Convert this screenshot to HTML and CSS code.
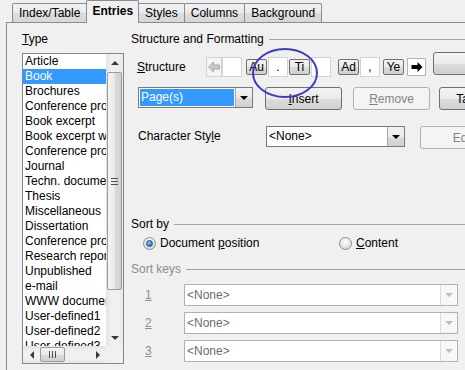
FILE: index.html
```html
<!DOCTYPE html>
<html lang="en">
<head>
    <meta charset="UTF-8">
    <title>Entries</title>
    <link rel="stylesheet" href="styles.css">
</head>
<body>
    <div class="dialog">
        <div class="tabs">
            <div class="tab">Index/Table</div>
            <div class="tab active">Entries</div>
            <div class="tab">Styles</div>
            <div class="tab">Columns</div>
            <div class="tab">Background</div>
        </div>

        <div class="panel">
            <div class="type-col">
                <div class="label"><u>T</u>ype</div>
                <div class="listbox">
                    <div class="list-view">
                        <ul class="items">
                            <li>Article</li>
                            <li class="selected">Book</li>
                            <li>Brochures</li>
                            <li>Conference proceedings</li>
                            <li>Book excerpt</li>
                            <li>Book excerpt with title</li>
                            <li>Conference proceedings</li>
                            <li>Journal</li>
                            <li>Techn. documentation</li>
                            <li>Thesis</li>
                            <li>Miscellaneous</li>
                            <li>Dissertation</li>
                            <li>Conference proceedings</li>
                            <li>Research report</li>
                            <li>Unpublished</li>
                            <li>e-mail</li>
                            <li>WWW document</li>
                            <li>User-defined1</li>
                            <li>User-defined2</li>
                            <li>User-defined3</li>
                        </ul>
                        <div class="vscroll">
                            <div class="sb-btn"><span class="tri-up"></span></div>
                            <div class="sb-track">
                                <div class="vthumb"><span class="vgrip"></span></div>
                            </div>
                            <div class="sb-btn"><span class="tri-down"></span></div>
                        </div>
                    </div>
                    <div class="hscroll-row">
                        <div class="hscroll">
                            <div class="sb-btn"><span class="tri-left"></span></div>
                            <div class="hthumb"><span class="hgrip"></span></div>
                            <div class="sb-spacer"></div>
                            <div class="sb-btn"><span class="tri-right"></span></div>
                        </div>
                        <div class="sb-corner"></div>
                    </div>
                </div>
            </div>

            <div class="main-col">
                <div class="group-title">Structure and Formatting</div>

                <div class="structure-row">
                    <span class="row-label structure-label"><u>S</u>tructure</span>
                    <div class="strip">
                        <span class="strip-arrow">
                            <svg width="12" height="12" viewBox="0 0 12 12"><polygon points="0.5,6 5.5,1 5.5,4 11.5,4 11.5,8 5.5,8 5.5,11" fill="#c8c8c8" stroke="#a8a8a8" stroke-width="1"/></svg>
                        </span>
                        <span class="token-field"></span>
                        <span class="token-btn gap-l">Au</span>
                        <span class="token-field">.</span>
                        <span class="token-btn">Ti</span>
                        <span class="token-field"></span>
                        <span class="token-btn gap-xl">Ad</span>
                        <span class="token-field">,</span>
                        <span class="token-btn gap-m">Ye</span>
                        <span class="strip-arrow right">
                            <svg width="12" height="12" viewBox="0 0 12 12"><polygon points="11.5,6 6.5,1 6.5,4 0.5,4 0.5,8 6.5,8 6.5,11" fill="#000"/></svg>
                        </span>
                    </div>
                    <button class="btn side-btn top-btn"></button>
                </div>

                <div class="action-row">
                    <div class="combo page-combo">
                        <span class="combo-text chosen">Page(s)</span>
                        <span class="combo-btn"></span>
                    </div>
                    <button class="btn insert-btn"><u>I</u>nsert</button>
                    <button class="btn remove-btn" disabled><u>R</u>emove</button>
                    <button class="btn side-btn tab-btn">Tab stop</button>
                </div>

                <div class="char-row">
                    <span class="row-label char-label">Character Sty<u>l</u>e</span>
                    <div class="combo char-combo">
                        <span class="combo-text">&lt;None&gt;</span>
                        <span class="combo-btn"></span>
                    </div>
                    <button class="btn edit-btn" disabled>Edit...</button>
                </div>

                <div class="group-title sort-title">Sort by</div>
                <div class="radio-row">
                    <label class="radio-item first">
                        <span class="radio checked"></span>
                        <span>Document <u>p</u>osition</span>
                    </label>
                    <label class="radio-item">
                        <span class="radio"></span>
                        <span><u>C</u>ontent</span>
                    </label>
                </div>

                <div class="group-title keys-title">Sort keys</div>
                <div class="key-row">
                    <span class="key-label"><u>1</u></span>
                    <div class="combo key-combo">
                        <span class="combo-text">&lt;None&gt;</span>
                        <span class="combo-btn"></span>
                    </div>
                </div>
                <div class="key-row">
                    <span class="key-label"><u>2</u></span>
                    <div class="combo key-combo">
                        <span class="combo-text">&lt;None&gt;</span>
                        <span class="combo-btn"></span>
                    </div>
                </div>
                <div class="key-row">
                    <span class="key-label"><u>3</u></span>
                    <div class="combo key-combo">
                        <span class="combo-text">&lt;None&gt;</span>
                        <span class="combo-btn"></span>
                    </div>
                </div>
            </div>
        </div>

        <!-- hand-drawn highlight around the "." field -->
        <svg class="annotation" width="465" height="370" viewBox="0 0 465 370">
            <ellipse cx="285" cy="73" rx="32" ry="24" fill="none" stroke="#3c3cc4" stroke-width="2"/>
        </svg>
    </div>
</body>
</html>
```

FILE: styles.css
```css
body {
    margin: 0;
    background: #f0f0f0;
    font-family: "Liberation Sans", Arial, sans-serif;
    font-size: 12px;
    color: #000;
    overflow: hidden;
}
.dialog {
    position: relative;
    width: 520px;
    height: 370px;
}

/* tabs */
.tabs {
    display: flex;
    align-items: flex-end;
    height: 22px;
    padding-left: 13px;
    position: relative;
    z-index: 1;
}
.tab {
    height: 18px;
    line-height: 18px;
    padding: 0 6px;
    margin-left: -1px;
    border: 1px solid #898c95;
    border-bottom: none;
    border-radius: 2px 2px 0 0;
    background: linear-gradient(#f3f3f3, #e9e9e9 50%, #dcdcdc 51%, #d7d7d7);
}
.tab.active {
    height: 22px;
    line-height: 21px;
    margin-bottom: -1px;
    font-weight: bold;
    padding: 0 5px;
    background: #f0f0f0;
}

.panel {
    display: flex;
    height: 339px;
    margin-left: 6px;
    padding: 8px 0 0 15px;
    border-top: 1px solid #898c95;
    border-left: 1px solid #898c95;
}

/* type list */
.type-col {
    width: 102px;
    margin-right: 7px;
    flex-shrink: 0;
}
.label {
    line-height: 16px;
}
.listbox {
    margin-top: 6px;
    width: 100px;
    height: 309px;
    border: 1px solid #828790;
    background: #fff;
}
.list-view {
    display: flex;
    height: 292px;
}
.items {
    width: 83px;
    margin: 0;
    padding: 0;
    list-style: none;
    overflow: hidden;
}
.items li {
    height: 15px;
    line-height: 15px;
    padding-left: 2px;
    white-space: nowrap;
    overflow: hidden;
}
.items li.selected {
    background: #3399ff;
    color: #fff;
}

.vscroll {
    width: 17px;
    display: flex;
    flex-direction: column;
    background: linear-gradient(90deg, #e3e3e3, #f0f0f0 30%, #f0f0f0 70%, #e8e8e8);
}
.sb-btn {
    width: 17px;
    height: 17px;
    flex-shrink: 0;
    display: flex;
    align-items: center;
    justify-content: center;
}
.sb-track {
    flex: 1;
}
.vthumb {
    margin: 1px 1px 0;
    height: 216px;
    border: 1px solid #9b9b9b;
    border-radius: 2px;
    background: linear-gradient(90deg, #f4f4f4, #eaeaea 50%, #dadada 51%, #d2d2d2);
    display: flex;
    align-items: center;
    justify-content: center;
}
.vgrip {
    width: 7px;
    height: 7px;
    background: repeating-linear-gradient(#4d4d4d 0 1px, transparent 1px 3px);
}
.tri-up {
    border-left: 4px solid transparent;
    border-right: 4px solid transparent;
    border-bottom: 4px solid #3a3a3a;
}
.tri-down {
    border-left: 4px solid transparent;
    border-right: 4px solid transparent;
    border-top: 4px solid #3a3a3a;
}
.tri-left {
    border-top: 4px solid transparent;
    border-bottom: 4px solid transparent;
    border-right: 4px solid #3a3a3a;
}
.tri-right {
    border-top: 4px solid transparent;
    border-bottom: 4px solid transparent;
    border-left: 4px solid #3a3a3a;
}

.hscroll-row {
    display: flex;
    height: 17px;
}
.hscroll {
    width: 83px;
    display: flex;
    background: linear-gradient(#e3e3e3, #f0f0f0 30%, #f0f0f0 70%, #e8e8e8);
}
.hthumb {
    width: 23px;
    margin: 1px 0;
    border: 1px solid #9b9b9b;
    border-radius: 2px;
    background: linear-gradient(#f4f4f4, #eaeaea 50%, #dadada 51%, #d2d2d2);
    display: flex;
    align-items: center;
    justify-content: center;
}
.hgrip {
    width: 7px;
    height: 7px;
    background: repeating-linear-gradient(90deg, #4d4d4d 0 1px, transparent 1px 3px);
}
.sb-spacer {
    flex: 1;
}
.sb-corner {
    width: 17px;
    background: #f0f0f0;
}

/* right side */
.main-col {
    width: 380px;
    flex-shrink: 0;
}
.group-title {
    display: flex;
    align-items: center;
    line-height: 16px;
}
.group-title::after {
    content: "";
    flex: 1;
    margin-left: 5px;
    border-top: 1px solid #a3a3a3;
}
.row-label {
    flex-shrink: 0;
}

.structure-row {
    display: flex;
    align-items: flex-start;
    margin-top: 10px;
    height: 20px;
    padding-left: 6px;
}
.structure-label {
    width: 69px;
    line-height: 20px;
}
.strip {
    display: flex;
    align-items: center;
    height: 20px;
}
.strip-arrow {
    width: 16px;
    height: 20px;
    box-sizing: border-box;
    border: 1px solid #d3d3d3;
    background: #f4f4f4;
    display: flex;
    align-items: center;
    justify-content: center;
}
.strip-arrow.right {
    width: 19px;
    height: 18px;
    margin-left: 2px;
    border-color: #b5b5b5;
    background: #fff;
}
.token-field {
    width: 20px;
    height: 20px;
    box-sizing: border-box;
    border: 1px solid #d3d3d3;
    background: #fff;
    text-align: center;
    line-height: 18px;
}
.token-btn {
    width: 21px;
    height: 16px;
    box-sizing: border-box;
    margin: 0 1px;
    border: 1px solid #707070;
    border-radius: 2px;
    background: linear-gradient(#f2f2f2, #ebebeb 50%, #dddddd 51%, #cfcfcf);
    text-align: center;
    line-height: 14px;
}
.token-btn.gap-l {
    margin-left: 4px;
}
.token-btn.gap-xl {
    margin-left: 7px;
}
.token-btn.gap-m {
    margin-left: 3px;
}

.btn {
    height: 23px;
    box-sizing: border-box;
    padding: 0;
    border: 1px solid #707070;
    border-radius: 3px;
    background: linear-gradient(#f2f2f2, #ebebeb 50%, #dddddd 51%, #cfcfcf);
    font: inherit;
    color: #000;
    text-align: center;
    flex-shrink: 0;
}
.btn:disabled {
    border-color: #adb2b5;
    background: #f4f4f4;
    color: #838383;
}
.side-btn {
    width: 80px;
}
.top-btn {
    margin-left: 7px;
    margin-top: -5px;
}

.action-row {
    display: flex;
    align-items: flex-start;
    margin-top: 10px;
    padding-left: 7px;
}
.combo {
    display: flex;
    height: 21px;
    box-sizing: border-box;
    border: 1px solid #7a7a7a;
    background: #fff;
    flex-shrink: 0;
}
.combo-text {
    flex: 1;
    padding-left: 2px;
    line-height: 19px;
    white-space: nowrap;
}
.combo-text.chosen {
    margin: 1px;
    padding-left: 1px;
    line-height: 17px;
    background: #3399ff;
    color: #fff;
}
.combo-btn {
    width: 16px;
    border-left: 1px solid #a7a7a7;
    background: linear-gradient(#f2f2f2, #ebebeb 50%, #dddddd 51%, #cfcfcf);
    display: flex;
    align-items: center;
    justify-content: center;
}
.combo-btn::before {
    content: "";
    border-left: 4px solid transparent;
    border-right: 4px solid transparent;
    border-top: 4px solid #000;
}
.page-combo {
    width: 115px;
}
.insert-btn {
    width: 77px;
    margin-left: 12px;
}
.remove-btn {
    width: 77px;
    margin-left: 11px;
}
.tab-btn {
    margin-left: 9px;
}

.char-row {
    display: flex;
    align-items: flex-start;
    margin-top: 16px;
    padding-left: 7px;
}
.char-label {
    width: 128px;
    line-height: 21px;
}
.char-combo {
    width: 139px;
}
.edit-btn {
    width: 96px;
    margin-left: 15px;
}

.sort-title {
    margin-top: 67px;
}
.radio-row {
    display: flex;
    margin-top: 3px;
    padding-left: 12px;
    line-height: 16px;
}
.radio-item {
    display: flex;
    align-items: center;
    gap: 4px;
}
.radio-item.first {
    width: 196px;
}
.radio {
    width: 13px;
    height: 13px;
    box-sizing: border-box;
    border: 1px solid #8e8f8f;
    border-radius: 50%;
    background: radial-gradient(circle at 50% 35%, #ffffff, #dcdcdc 70%, #c8c8c8);
    display: flex;
    align-items: center;
    justify-content: center;
}
.radio.checked::after {
    content: "";
    width: 5px;
    height: 5px;
    border-radius: 50%;
    border: 1px solid #1a4f86;
    background: radial-gradient(circle at 40% 35%, #9ad6ff, #2a7fd0 60%, #164f8c);
}

.keys-title {
    margin-top: 10px;
    color: #8d8d8d;
}
.key-row {
    display: flex;
    align-items: center;
    margin-top: 6px;
    padding-left: 14px;
}
.keys-title + .key-row {
    margin-top: 7px;
}
.key-label {
    width: 39px;
    color: #8d8d8d;
}
.key-combo {
    width: 274px;
    height: 22px;
    border-color: #adb2b5;
    color: #6d6d6d;
}
.key-combo .combo-text {
    line-height: 20px;
}
.key-combo .combo-btn {
    width: 16px;
    border-left-color: #dadada;
    background: #f7f7f7;
}
.key-combo .combo-btn::before {
    border-top-color: #bdbdbd;
}

/* annotation overlay */
.annotation {
    position: absolute;
    left: 0;
    top: 0;
    pointer-events: none;
}
```
